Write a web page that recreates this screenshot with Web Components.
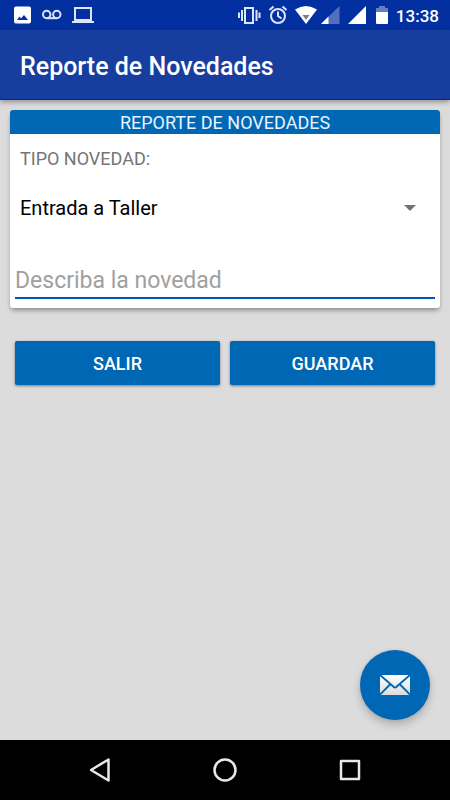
<!DOCTYPE html>
<html lang="es">
<head>
<meta charset="utf-8">
<meta name="viewport" content="width=device-width, initial-scale=1">
<title>Reporte de Novedades</title>
<style>
html,body{height:100%;margin:0}
body{font-family:Roboto,"Noto Sans",sans-serif;background:#dcdcdc}
</style>
</head>
<body>
<report-app></report-app>
<script>
const define = (name, html) => customElements.define(name, class extends HTMLElement {
  constructor() {
    super();
    this.attachShadow({mode: "open"}).innerHTML = html;
  }
});

define("status-bar", `
<style>
:host{display:flex;justify-content:space-between;align-items:center;height:30px;padding:0 11px 0 14px;background:#0230a0;color:#fff}
div{display:flex;align-items:center}
.left{gap:10px}
.right{gap:4px}
svg{display:block;height:30px;overflow:visible}
time{font-size:17px;line-height:30px;font-weight:500;padding-top:2px}
</style>
<div class="left">
  <svg width="18" viewBox="0 0 18 30" aria-hidden="true"><path fill="#fff" fill-rule="evenodd" d="M2 6.500h13a2 2 0 0 1 2 2v13a2 2 0 0 1-2 2H2a2 2 0 0 1-2-2v-13a2 2 0 0 1 2-2zM3 20h11l-4-5-3 3.500-1.500-2z"/></svg>
  <svg width="20" viewBox="0 0 20 30" fill="none" stroke="#dce5fa" stroke-width="2" aria-hidden="true"><circle cx="4.700" cy="14.500" r="3.700"/><circle cx="14.800" cy="14.500" r="3.700"/><path d="M4.700 18.200h10.100"/></svg>
  <svg width="22" viewBox="0 0 22 30" aria-hidden="true"><path d="M3 8h16v12H3z" fill="none" stroke="#dce5fa" stroke-width="2"/><path d="M0 21h22v2H0z" fill="#dce5fa"/></svg>
</div>
<div class="right">
  <svg width="28" viewBox="235 0 28 30" fill="none" stroke="#dce5fa" stroke-width="2" aria-hidden="true"><path d="M244 8h8v15h-8zM241 10v11M255.500 10v11M238 12.500v5.500M258.500 12.500v5.500"/></svg>
  <svg width="20" viewBox="267 0 20 30" fill="none" stroke="#dce5fa" stroke-width="2" aria-hidden="true"><circle cx="277" cy="16" r="7"/><path d="M277 11.500V16l3.500 2.500M268.500 10l4-3.500M285.500 10l-4-3.500"/></svg>
  <svg width="24" viewBox="291 0 24 30" aria-hidden="true"><path fill="#fff" d="M294 9.500Q305 2.500 316 9.500L305 24z"/><path fill="#7b8188" d="M301.500 15h7L305 20z"/></svg>
  <svg width="24" viewBox="319 0 24 30" aria-hidden="true"><path fill="#526fbd" d="M320 24 338.500 6v18z"/><path fill="#fff" d="M320 24l7.500-7.500V24z"/></svg>
  <svg width="20" viewBox="347 0 20 30" aria-hidden="true"><path fill="#fff" d="M347 24 365 6v18z"/></svg>
  <svg width="20" viewBox="371 0 20 30" aria-hidden="true"><path fill="#667fc3" d="M375 12V8h3V6h6v2h3v4z"/><path fill="#fff" d="M375 12h12v11a1 1 0 0 1-1 1h-10a1 1 0 0 1-1-1z"/></svg>
  <time>13:38</time>
</div>`);

define("app-bar", `
<style>
:host{display:flex;align-items:center;height:70px;box-sizing:border-box;padding:4px 20px 0;background:#173e9f;color:#fff;border-bottom:1px solid #03288e;box-shadow:0 2px 5px rgba(0,0,0,.35);z-index:1}
h1{margin:0;font-size:25px;line-height:32px;font-weight:500}
</style>
<h1><slot></slot></h1>`);

define("report-card", `
<style>
:host{display:block;background:#fff;border-radius:3px;box-shadow:0 3px 5px -1px rgba(0,0,0,.4)}
h2{margin:0;height:24px;background:#0067b4;color:#e8f3ff;border-radius:3px 3px 0 0;font-size:18px;line-height:26px;font-weight:400;text-align:center}
.body{padding:13px 5px 9px}
label{display:block;font-size:18px;line-height:24px;color:#757575;padding:0 5px}
.pick{display:flex;align-items:center;margin-top:12px;padding:0 18px 0 5px}
select{appearance:none;flex:1;min-width:0;height:50px;border:0;padding:0;margin:0 -12px 0 0;background:none;font:400 20px/28px Roboto,sans-serif;color:#000}
.pick svg{pointer-events:none}
input{display:block;box-sizing:border-box;width:100%;height:36px;margin-top:30px;padding:0;border:0;border-bottom:2px solid #0058b0;border-radius:0;outline:0;background:none;font:400 23px/30px Roboto,sans-serif;color:#000}
input::placeholder{color:#a0a0a0;opacity:1}
</style>
<h2>REPORTE DE NOVEDADES</h2>
<div class="body">
  <label for="kind">TIPO NOVEDAD:</label>
  <div class="pick"><select id="kind"><option>Entrada a Taller</option></select>
  <svg width="14" height="8" viewBox="0 0 14 8" aria-hidden="true"><path d="M1 1h12L7 7z" fill="#737373"/></svg></div>
  <input id="detail" type="text" placeholder="Describa la novedad" aria-label="Describa la novedad">
</div>`);

define("action-button", `
<style>
:host{display:block;flex:1}
button{display:block;width:100%;height:44px;border:0;border-radius:2px;padding:2px 0 0;background:#0067b4;color:#fff;font:500 18px/24px Roboto,sans-serif;box-shadow:0 1px 3px rgba(0,0,0,.45)}
</style>
<button type="button"><slot></slot></button>`);

define("mail-fab", `
<style>
:host{display:block}
button{display:grid;place-items:center;width:70px;height:70px;border:0;border-radius:50%;padding:0;background:#0067b4;box-shadow:0 5px 9px rgba(0,0,0,.2),0 0 3px rgba(0,0,0,.12)}
</style>
<button type="button" aria-label="Enviar mensaje">
<svg width="30" height="22" viewBox="0 0 30 22" aria-hidden="true">
<defs><linearGradient id="g" x2="0" y2="1"><stop stop-color="#fff"/><stop offset="1" stop-color="#dcdcdc"/></linearGradient></defs>
<rect y="1" width="30" height="20" rx="1" fill="url(#g)"/>
<path d="M0 1 13.500 12.800q1.500 1.200 3 0L30 1M0 20.500l10-10M30 20.500l-10-10" fill="none" stroke="#0067b4" stroke-width="1.900"/>
</svg></button>`);

define("nav-bar", `
<style>
:host{display:flex;justify-content:center;gap:65px;height:60px;background:#000}
button{display:grid;place-items:center;width:60px;height:60px;padding:0;border:0;background:none}
svg{fill:none;stroke:#e8e8e8;stroke-width:2.500;stroke-linejoin:round}
</style>
<button type="button" aria-label="Atrás"><svg width="24" height="26" viewBox="0 0 24 26"><path d="M20.500 2.500v21L3 13z"/></svg></button>
<button type="button" aria-label="Inicio"><svg width="26" height="26" viewBox="0 0 26 26"><circle cx="13" cy="13" r="10.500"/></svg></button>
<button type="button" aria-label="Recientes"><svg width="24" height="24" viewBox="0 0 24 24"><path d="M3 3h18v18H3z"/></svg></button>`);

define("report-app", `
<style>
:host{display:flex;flex-direction:column;min-height:100vh}
main{flex:1;display:flex;flex-direction:column;padding:10px 10px 20px}
.actions{display:flex;gap:10px;padding:33px 5px 0}
mail-fab{margin:auto 10px 0 auto}
</style>
<status-bar></status-bar>
<app-bar>Reporte de Novedades</app-bar>
<main>
  <report-card></report-card>
  <div class="actions"><action-button>SALIR</action-button><action-button>GUARDAR</action-button></div>
  <mail-fab></mail-fab>
</main>
<nav-bar></nav-bar>`);
</script>
</body>
</html>
